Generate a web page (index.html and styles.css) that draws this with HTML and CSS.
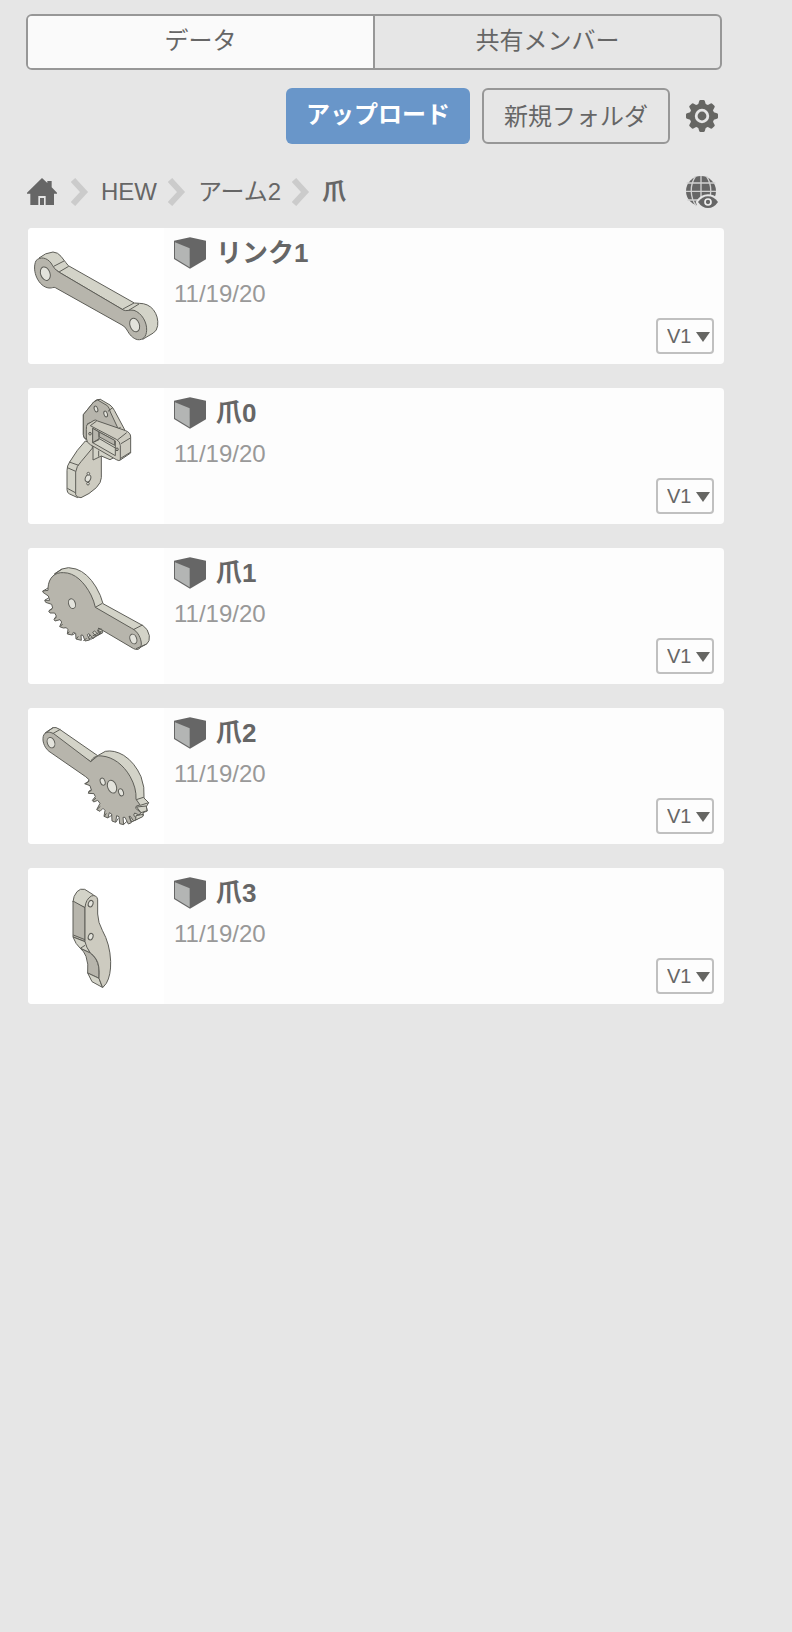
FILE: index.html
```html
<!DOCTYPE html>
<html lang="ja">
<head>
<meta charset="utf-8">
<meta name="viewport" content="width=device-width, initial-scale=1">
<title>爪</title>
<link rel="stylesheet" href="styles.css">
</head>
<body>
<svg class="defs" aria-hidden="true">
  <symbol id="chevron" viewBox="0 0 18 28"><path d="M2 2 13 14 2 26" fill="none" stroke="#cbcbcb" stroke-width="6"/></symbol>
  <symbol id="cube" viewBox="462 56 96 94">
    <path d="M462 66 510 56 558 66V122L510 150 462 121Z" fill="#666"/>
    <path d="M465 71 509 89V146L465 119Z" fill="#b3b5b4"/>
  </symbol>
  <symbol id="caret" viewBox="0 0 14 10"><path d="M0 0H14L7 10Z" fill="#666663"/></symbol>
</svg>
<div class="panel">
  <header class="top">
    <div class="tabs" role="tablist">
      <button class="tab tab-active" type="button" role="tab" aria-selected="true">データ</button>
      <button class="tab" type="button" role="tab" aria-selected="false">共有メンバー</button>
    </div>
    <div class="toolbar">
      <button class="btn btn-primary" type="button">アップロード</button>
      <button class="btn btn-outline" type="button">新規フォルダ</button>
      <button class="icon-btn" type="button" aria-label="設定">
        <svg class="icon" viewBox="-16 -16 32 32" fill="#666663">
          <circle r="12.4"/>
          <path id="tooth" d="M-4-11-2.8-15Q-2.500-16-1.500-16H1.500Q2.500-16 2.800-15L4-11Z"/>
          <use href="#tooth" transform="rotate(45)"/><use href="#tooth" transform="rotate(90)"/>
          <use href="#tooth" transform="rotate(135)"/><use href="#tooth" transform="rotate(180)"/>
          <use href="#tooth" transform="rotate(225)"/><use href="#tooth" transform="rotate(270)"/>
          <use href="#tooth" transform="rotate(315)"/>
          <circle r="5.800" stroke="#e6e6e6" stroke-width="2.800"/>
        </svg>
      </button>
    </div>
    <nav class="crumbs" aria-label="パンくず">
      <a class="home" href="#" aria-label="ホーム">
        <svg class="home-icon" viewBox="81 534 90 84"><path d="M126 534 142 549V543H155V562L171 578V581H162V615H137V588H115V615H91V581H81V578ZM120 594H132V615H120Z" fill="#666"/></svg>
      </a>
      <svg class="chev chev-first"><use href="#chevron"/></svg>
      <a class="crumb" href="#">HEW</a>
      <svg class="chev"><use href="#chevron"/></svg>
      <a class="crumb" href="#">アーム2</a>
      <svg class="chev"><use href="#chevron"/></svg>
      <span class="crumb crumb-current" aria-current="page">爪</span>
      <button class="icon-btn globe" type="button" aria-label="公開表示">
        <svg class="icon" viewBox="882 528 96 96">
          <circle cx="927" cy="573" r="45" fill="#666"/>
          <g fill="none" stroke="#d2d2d2" stroke-width="4"><path d="M884 549H970M882 574H972M886 600H968M927 528V618M911 528C893 554 893 592 913 618M943 528C961 554 961 592 941 618"/></g>
          <path d="M911 605Q926 583 948 583Q969 583 985 603V630H920Z" fill="#e6e6e6"/>
          <path d="M918 606Q931 589 948 589Q966 589 978 606Q966 624 948 624Q930 624 918 606Z" fill="#666"/>
          <circle cx="948" cy="606" r="9" fill="#666" stroke="#f0f0f0" stroke-width="5"/>
        </svg>
      </button>
    </nav>
  </header>

  <main>
    <ul class="list">
      <li class="card">
        <svg class="thumb" viewBox="24 24 408 408" role="img" aria-label="リンク1">
          <g class="line">
            <path class="lite" d="M57 114Q76 98 99 96Q114 97 123 109L137 127 145 137 343 249 358 250Q384 250 400 269Q416 290 413 317Q411 332 400 339L368 358 310 270 118 157Z"/>
            <path class="dark" d="M48 122C60 109 80 112 93 129C100 141 106 150 118 157L310 270C319 275 329 268 342 271C365 279 381 306 380 331C379 350 369 361 353 359C338 356 328 343 321 330Q316 320 306 315L106 203C101 200 97 205 87 204C56 201 34 153 48 122Z"/>
            <path d="M101 139 132 123M117 156 146 139M307 268 342 249M326 271 357 252"/>
            <ellipse class="hole" cx="76" cy="161" rx="14" ry="21" transform="rotate(-20 76 161)"/>
            <ellipse class="hole" cx="344" cy="315" rx="14" ry="21" transform="rotate(-20 344 315)"/>
          </g>
        </svg>
        <div class="info">
          <h2 class="name"><svg class="cube"><use href="#cube"/></svg>リンク1</h2>
          <p class="date">11/19/20</p>
        </div>
        <div class="version"><select class="ver" aria-label="リンク1 バージョン"><option>V1</option></select><svg class="caret"><use href="#caret"/></svg></div>
      </li>
      <li class="card">
        <svg class="thumb" viewBox="24 24 408 408" role="img" aria-label="爪0">
          <g class="line">
            <path class="face" d="M190 104 221 66Q228 57 241 58L270 75Q278 81 283 91L315 151 300 160 205 180Q190 179 190 163Z"/>
            <path class="dark" d="M190 104 221 66 233 60 262 77Q268 83 271 96L300 158 220 125 203 131V178Q190 175 190 163Z"/>
            <path d="M233 60 241 58M264 94 279 82M286 150 302 142"/>
            <ellipse class="hole" cx="228" cy="87" rx="5" ry="9" transform="rotate(-20 228 87)"/><ellipse class="hole" cx="257" cy="102" rx="5" ry="9" transform="rotate(-20 257 102)"/>
            <path class="lite" d="M196 183Q172 207 149 246Q141 257 141 271V329Q141 339 149 342L173 353 217 240V190Z"/>
            <path class="face" d="M215 207 184 244Q169 258 167 276V344Q169 353 183 353Q208 343 229 323Q244 307 244 293V209L225 197Z"/>
            <path d="M148 246 176 256M142 263 167 274M142 325 166 338"/>
            <path class="lite" d="M219 201V240L244 228 270 239 289 229 220 191Z"/>
            <path class="face" d="M201 134 222 121Q227 118 233 123L317 152Q332 158 332 171V219L301 240Q298 244 289 239L211 194Q199 188 199 174V149Q199 138 201 134Z"/>
            <path d="M211 137 289 178Q301 185 301 197V240M211 137 230 123M292 180 320 158M303 191 331 174M302 235 331 217"/>
            <path class="lite" d="M218 145 286 183V227L218 188Z"/><path class="dark" d="M218 145 237 156V179L218 188ZM237 156 284 181V196L237 170Z"/><path d="M218 188 238 176 286 204"/>
            <circle class="dark" cx="210" cy="161" r="4"/><circle class="dark" cx="291" cy="208" r="4"/>
            <ellipse class="hole" cx="204" cy="295" rx="8" ry="11" transform="rotate(20 204 295)"/><circle class="hole" cx="205" cy="281" r="4"/><circle class="hole" cx="204" cy="311" r="4"/>
            <path d="M236 212V230"/>
          </g>
        </svg>
        <div class="info">
          <h2 class="name"><svg class="cube"><use href="#cube"/></svg>爪0</h2>
          <p class="date">11/19/20</p>
        </div>
        <div class="version"><select class="ver" aria-label="爪0 バージョン"><option>V1</option></select><svg class="caret"><use href="#caret"/></svg></div>
      </li>
      <li class="card">
        <svg class="thumb" viewBox="24 24 408 408" role="img" aria-label="爪1">
          <g class="line">
            <path class="lite" d="M204 298 248 278V268L220 258Z"/>
            <path class="lite" d="M104 101 126 87Q144 79 168 87Q202 98 228 141Q243 166 249 191L369 257Q384 266 388 287Q390 305 380 312L350 328 300 260 220 240Z"/>
            <path class="dark" d="M84 144C86 112 105 96 131 98C164 98 193 126 213 165Q222 183 226 202L335 265C354 273 364 297 364 312C363 326 354 332 341 326L236 264L233 273 242 277 235 284 224 273 218 277 227 288 219 296 207 281 202 284 209 300 195 303 189 286 183 285 184 301 168 297 167 280 160 277 156 285 142 282 144 269 139 263 130 264 119 260 125 246 120 239 105 243 102 238 109 228 104 219 90 219 86 213 98 204 95 193 77 187 74 181 89 181 85 168 69 157 68 153 84 151Z"/>
            <path d="M226 202 247 190M340 269 367 255M69 153 84 144M75 180 86 174M87 212 97 206M103 237 110 231M121 259 128 252M142 282 148 275M157 285 165 280M169 297 175 289M190 302 200 295M211 299 248 278M218 288 247 272M233 273 244 266M103 103 126 87M348 326 380 312"/>
            <ellipse class="hole" cx="156" cy="191" rx="10" ry="15" transform="rotate(-20 156 191)"/>
            <ellipse class="hole" cx="340" cy="297" rx="10" ry="15" transform="rotate(-20 340 297)"/>
          </g>
        </svg>
        <div class="info">
          <h2 class="name"><svg class="cube"><use href="#cube"/></svg>爪1</h2>
          <p class="date">11/19/20</p>
        </div>
        <div class="version"><select class="ver" aria-label="爪1 バージョン"><option>V1</option></select><svg class="caret"><use href="#caret"/></svg></div>
      </li>
      <li class="card">
        <svg class="thumb" viewBox="24 24 408 408" role="img" aria-label="爪2">
          <g class="line">
            <path class="lite" d="M76 98 99 83Q107 80 119 88L233 167 256 154Q282 149 311 166Q344 187 363 230Q375 261 372 294L386 308 379 320 382 333 369 338 370 347 335 366 320 330 220 190Z"/>
            <path class="dark" d="M72 103C80 95 89 95 101 101L212 185C219 171 230 166 246 168C279 171 310 194 330 229Q350 264 348 298L360 307 360 315 349 318 347 325 363 338 357 345 344 339 341 345 351 358 341 363 331 349 327 349 334 368 325 372 315 352 309 352 311 374 299 371 297 350 290 347 287 367 276 363 275 342 268 338 264 354 252 349 255 331 249 325 240 334 230 329 240 310 233 301 221 306 217 301 226 290 222 281 205 280 207 273 214 270 210 257 194 251 204 246 207 239 197 230 87 154C72 142 64 119 72 103Z"/>
            <path class="lite" d="M349 299 370 292 386 308 361 316ZM350 321 379 318 381 332 363 338ZM348 347 370 343 368 350 347 360Z"/>
            <path d="M98 101 121 88M212 185 233 168M80 97 99 83M195 252 208 243M206 277 215 270M219 302 228 294M231 328 241 319M253 349 259 340M265 353 276 345M288 366 295 355M311 373 321 364"/>
            <ellipse class="hole" cx="93" cy="128" rx="11" ry="16" transform="rotate(-20 93 128)"/>
            <ellipse class="hole" cx="276" cy="260" rx="13" ry="20" transform="rotate(-20 276 260)"/>
            <ellipse class="hole" cx="248" cy="245" rx="7" ry="11" transform="rotate(-20 248 245)"/><ellipse class="hole" cx="303" cy="277" rx="7" ry="11" transform="rotate(-20 303 277)"/>
          </g>
        </svg>
        <div class="info">
          <h2 class="name"><svg class="cube"><use href="#cube"/></svg>爪2</h2>
          <p class="date">11/19/20</p>
        </div>
        <div class="version"><select class="ver" aria-label="爪2 バージョン"><option>V1</option></select><svg class="caret"><use href="#caret"/></svg></div>
      </li>
      <li class="card">
        <svg class="thumb" viewBox="24 24 408 408" role="img" aria-label="爪3">
          <g class="line">
            <path class="lite" d="M159 125Q160 108 171 95Q181 84 194 88L221 105 232 118 196 143 160 127Z"/>
            <path class="dark" d="M159 123 195 143V245L159 231Z"/>
            <path class="lite" d="M159 231 195 245 211 279 181 265Q167 253 159 231Z"/>
            <path class="dark" d="M181 265 211 279Q232 295 237 324V355L203 339Q206 311 198 289Q192 274 181 265Z"/>
            <path class="lite" d="M203 339 237 355 247 382 216 365Z"/>
            <path class="face" d="M195 143Q197 118 214 108Q230 103 233 119V162Q234 188 247 211Q270 252 272 304Q273 346 259 370L248 383 237 355Q240 315 228 297Q220 284 211 279Q198 261 195 245Z"/>
            <path d="M160 225 195 239M181 265 195 256"/>
            <ellipse class="hole" cx="212" cy="131" rx="7" ry="10" transform="rotate(20 212 131)"/>
            <ellipse class="hole" cx="212" cy="230" rx="7" ry="10" transform="rotate(20 212 230)"/>
          </g>
        </svg>
        <div class="info">
          <h2 class="name"><svg class="cube"><use href="#cube"/></svg>爪3</h2>
          <p class="date">11/19/20</p>
        </div>
        <div class="version"><select class="ver" aria-label="爪3 バージョン"><option>V1</option></select><svg class="caret"><use href="#caret"/></svg></div>
      </li>
    </ul>
  </main>
</div>
</body>
</html>
```
FILE: styles.css
```css
* { box-sizing: border-box; }

body {
  margin: 0;
  background: #e6e6e6;
  color: #666;
  font-family: "Liberation Sans", "Noto Sans CJK JP", sans-serif;
  font-size: 24px;
  line-height: 32px;
}

button, select { font: inherit; color: inherit; margin: 0; cursor: pointer; }
svg { display: block; flex: none; }
.defs { position: absolute; width: 0; height: 0; }

.top { padding: 14px 70px 0 26px; }

.tabs {
  display: flex;
  border: 2px solid #979797;
  border-radius: 6px;
  overflow: hidden;
}
.tab {
  flex: 1;
  height: 52px;
  padding: 0 0 2px;
  border: 0;
  background: transparent;
}
.tab-active { background: #fafafa; border-right: 2px solid #979797; }

.toolbar {
  display: flex;
  justify-content: flex-end;
  align-items: center;
  gap: 12px;
  margin-top: 18px;
  padding-right: 4px;
}
.btn { height: 56px; padding: 0 20px; border-radius: 6px; }
.btn-primary { border: 0; background: #6996c9; color: #fff; font-weight: bold; padding-bottom: 2px; }
.btn-outline { border: 2px solid #979797; background: transparent; padding-top: 2px; }
.icon-btn { padding: 0; border: 0; background: transparent; }
.toolbar .icon-btn { margin-left: 4px; }
.icon { width: 32px; height: 32px; }

.crumbs {
  display: flex;
  align-items: center;
  margin-top: 32px;
  padding: 0 4px 0 1px;
}
.home-icon { width: 30px; height: 28px; }
.chev { width: 18px; height: 28px; margin: 0 12px 0 11px; }
.chev-first { margin-left: 14px; }
.crumb { color: inherit; text-decoration: none; }
.crumb-current { font-weight: bold; }
.globe { margin-left: auto; }

.list {
  display: grid;
  gap: 24px;
  margin: 0;
  padding: 20px 68px 24px 28px;
  list-style: none;
}
.card {
  display: flex;
  background: #fdfdfd;
  border-radius: 4px;
  overflow: hidden;
}
.thumb { width: 136px; height: 136px; background: #fff; }
.info { flex: 1; padding: 8px 10px; }
.name {
  display: flex;
  align-items: center;
  gap: 10px;
  margin: 0;
  font-size: 26px;
  line-height: 34px;
}
.cube { width: 32px; height: 32px; }
.date { margin: 8px 0 0; color: #999; }

.version { position: relative; align-self: flex-end; margin: 0 10px 10px 0; }
.ver {
  display: block;
  appearance: none;
  width: 58px;
  height: 36px;
  padding: 0 0 4px 9px;
  border: 2px solid #c0c0c0;
  border-radius: 4px;
  background: transparent;
  font-size: 20px;
}
.caret {
  position: absolute;
  right: 4px;
  top: 14px;
  width: 14px;
  height: 10px;
  pointer-events: none;
}

.line { stroke: #5e5e58; stroke-width: 3; stroke-linejoin: round; fill: none; }
.lite { fill: #d3d3c8; }
.face { fill: #cdcbc0; }
.dark { fill: #b7b5ac; }
.hole { fill: #e3e3dc; }
```
